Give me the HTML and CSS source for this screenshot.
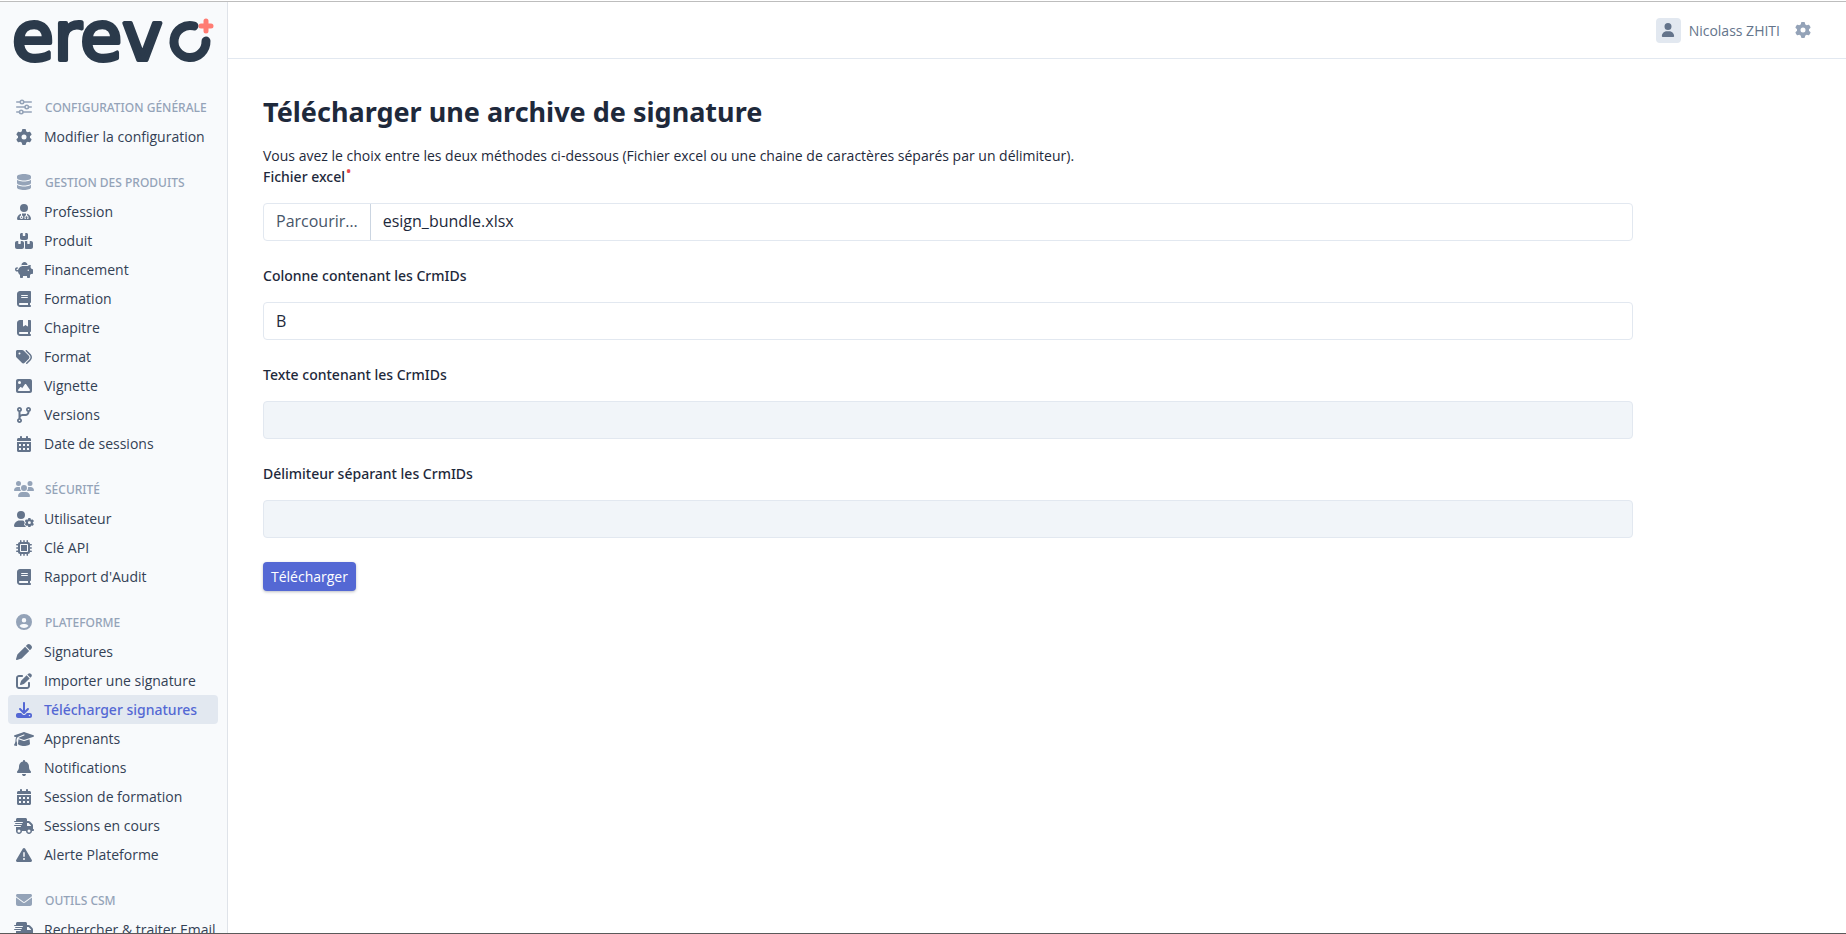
FILE: index.html
```html
<!DOCTYPE html>
<html lang="fr">
<head>
    <meta charset="UTF-8" />
    <meta name="viewport" content="width=device-width, initial-scale=1.0" />
    <title>Télécharger une archive de signature</title>
    <link rel="stylesheet" href="styles.css">
</head>
<body>

<!-- Icônes -->
<svg class="sprite" aria-hidden="true">
    <symbol id="i-sliders" viewBox="0 0 512 512"><g fill="none" stroke="currentColor" stroke-width="50" stroke-linecap="round"><path d="M24 96h100M260 96h228M24 256h252M412 256h76M24 416h76M236 416h252"/><circle cx="192" cy="96" r="56"/><circle cx="344" cy="256" r="56"/><circle cx="168" cy="416" r="56"/></g></symbol>
    <symbol id="i-gear" viewBox="0 0 512 512"><path d="M495.9 166.6c3.2 8.7 .5 18.4-6.4 24.6l-43.3 39.4c1.1 8.3 1.7 16.8 1.7 25.4s-.6 17.1-1.7 25.4l43.3 39.4c6.9 6.2 9.6 15.9 6.4 24.6c-4.4 11.9-9.7 23.3-15.8 34.3l-4.7 8.1c-6.6 11-14 21.4-22.1 31.2c-5.9 7.2-15.7 9.6-24.5 6.8l-55.7-17.7c-13.4 10.3-28.2 18.9-44 25.4l-12.5 57.1c-2 9.1-9 16.3-18.2 17.8c-13.8 2.3-28 3.5-42.5 3.5s-28.7-1.2-42.5-3.5c-9.2-1.5-16.2-8.7-18.2-17.8l-12.5-57.1c-15.8-6.5-30.6-15.1-44-25.4L83.1 425.9c-8.8 2.8-18.6 .3-24.5-6.8c-8.1-9.8-15.5-20.2-22.1-31.2l-4.7-8.1c-6.1-11-11.4-22.4-15.8-34.3c-3.2-8.7-.5-18.4 6.4-24.6l43.3-39.4C64.6 273.1 64 264.6 64 256s.6-17.1 1.7-25.4L22.4 191.2c-6.9-6.2-9.6-15.9-6.4-24.6c4.4-11.9 9.7-23.3 15.8-34.3l4.7-8.1c6.6-11 14-21.4 22.1-31.2c5.9-7.2 15.7-9.6 24.5-6.8l55.7 17.7c13.4-10.3 28.2-18.9 44-25.4l12.5-57.1c2-9.1 9-16.3 18.2-17.8C227.3 1.2 241.5 0 256 0s28.7 1.2 42.5 3.5c9.2 1.5 16.2 8.7 18.2 17.8l12.5 57.1c15.8 6.5 30.6 15.1 44 25.4l55.7-17.7c8.8-2.8 18.6-.3 24.5 6.8c8.1 9.8 15.5 20.2 22.1 31.2l4.7 8.1c6.1 11 11.4 22.4 15.8 34.3zM256 336a80 80 0 1 0 0-160 80 80 0 1 0 0 160z"/></symbol>
    <symbol id="i-database" viewBox="0 0 448 512"><path d="M448 80v48c0 44.2-100.3 80-224 80S0 172.2 0 128V80C0 35.8 100.3 0 224 0S448 35.8 448 80zM393.2 214.7c20.8-7.4 39.9-16.9 54.8-28.6V288c0 44.2-100.3 80-224 80S0 332.2 0 288V186.1c14.9 11.8 34 21.2 54.8 28.6C99.7 230.7 159.5 240 224 240s124.3-9.3 169.2-25.3zM0 346.1c14.9 11.8 34 21.2 54.8 28.6C99.7 390.7 159.5 400 224 400s124.3-9.3 169.2-25.3c20.8-7.4 39.9-16.9 54.8-28.6V432c0 44.2-100.3 80-224 80S0 476.2 0 432V346.1z"/></symbol>
    <symbol id="i-doctor" viewBox="0 0 448 512"><path d="M224 256A128 128 0 1 0 224 0a128 128 0 1 0 0 256zm-96 55.2C54 332.9 0 401.3 0 482.3C0 498.7 13.3 512 29.7 512H418.3c16.4 0 29.7-13.3 29.7-29.7c0-81-54-149.4-128-171.1V362c27.6 7.1 48 32.2 48 62v40c0 8.8-7.2 16-16 16H336c-8.8 0-16-7.2-16-16s7.2-16 16-16V424c0-17.7-14.3-32-32-32s-32 14.3-32 32v24c8.8 0 16 7.2 16 16s-7.2 16-16 16H256c-8.8 0-16-7.2-16-16V424c0-29.8 20.4-54.9 48-62V304.9c-6-.6-12.1-.9-18.3-.9H178.3c-6.2 0-12.3 .3-18.3 .9v65.4c23.1 6.9 40 28.3 40 53.7c0 30.9-25.1 56-56 56s-56-25.1-56-56c0-25.4 16.9-46.8 40-53.7V311.2zM144 448a24 24 0 1 0 0-48 24 24 0 1 0 0 48z"/></symbol>
    <symbol id="i-boxes" viewBox="0 0 576 512"><path d="M248 0H208c-26.5 0-48 21.5-48 48V160c0 35.3 28.7 64 64 64H352c35.3 0 64-28.7 64-64V48c0-26.5-21.5-48-48-48H328V80c0 8.8-7.2 16-16 16H264c-8.8 0-16-7.2-16-16V0zM64 256c-35.3 0-64 28.7-64 64V448c0 35.3 28.7 64 64 64H224c35.3 0 64-28.7 64-64V320c0-35.3-28.7-64-64-64H184v80c0 8.8-7.2 16-16 16H120c-8.8 0-16-7.2-16-16V256H64zM352 512H512c35.3 0 64-28.7 64-64V320c0-35.3-28.7-64-64-64H472v80c0 8.8-7.2 16-16 16H408c-8.8 0-16-7.2-16-16V256H352c-15 0-28.8 5.1-39.7 13.8c4.9 10.4 7.7 22 7.7 34.2V464c0 12.2-2.8 23.8-7.7 34.2C323.2 506.9 337 512 352 512z"/></symbol>
    <symbol id="i-piggy" viewBox="0 0 576 512"><path d="M400 96l0 .7c-5.3-.4-10.6-.7-16-.7H256c-16.5 0-32.5 2.1-47.8 6c-.1-2-.2-4-.2-6c0-53 43-96 96-96s96 43 96 96zm-16 32c3.5 0 7 .1 10.4 .3c4.2 .3 8.4 .7 12.6 1.3C424.6 109.1 450.8 96 480 96h11.5c10.4 0 18 9.8 15.5 19.9l-13.8 55.2c15.8 14.8 28.7 32.8 37.5 52.9H544c17.7 0 32 14.3 32 32v96c0 17.7-14.3 32-32 32H512c-9.1 12.1-19.9 22.9-32 32v64c0 17.7-14.3 32-32 32H416c-17.7 0-32-14.3-32-32V448H256v32c0 17.7-14.3 32-32 32H192c-17.7 0-32-14.3-32-32V416c-34.9-26.2-58.7-66.3-63.2-112H68c-37.6 0-68-30.4-68-68s30.4-68 68-68h4c13.3 0 24 10.7 24 24s-10.7 24-24 24H68c-11 0-20 9-20 20s9 20 20 20H99.2c12.1-59.8 57.7-107.5 116.3-122.8c12.9-3.4 26.5-5.2 40.5-5.2H384zm64 136a24 24 0 1 0 -48 0 24 24 0 1 0 48 0z"/></symbol>
    <symbol id="i-book" viewBox="0 0 448 512"><path d="M96 0C43 0 0 43 0 96V416c0 53 43 96 96 96H384h32c17.7 0 32-14.3 32-32s-14.3-32-32-32V384c17.7 0 32-14.3 32-32V32c0-17.7-14.3-32-32-32H384 96zm0 384H352v64H96c-17.7 0-32-14.3-32-32s14.3-32 32-32zm32-240c0-8.8 7.2-16 16-16H336c8.8 0 16 7.2 16 16s-7.2 16-16 16H144c-8.8 0-16-7.2-16-16zm16 48H336c8.8 0 16 7.2 16 16s-7.2 16-16 16H144c-8.8 0-16-7.2-16-16s7.2-16 16-16z"/></symbol>
    <symbol id="i-bookmark" viewBox="0 0 448 512"><path d="M0 96C0 43 43 0 96 0h96V190.7c0 13.4 15.5 20.9 26 12.5L272 160l54 43.2c10.5 8.4 26 .9 26-12.5V0h32 32c17.7 0 32 14.3 32 32V352c0 17.7-14.3 32-32 32v64c17.7 0 32 14.3 32 32s-14.3 32-32 32H384 96c-53 0-96-43-96-96V96zM64 416c0 17.7 14.3 32 32 32H352V384H96c-17.7 0-32 14.3-32 32z"/></symbol>
    <symbol id="i-tags" viewBox="0 0 512 512"><path d="M345 39.1L472.8 168.4c52.4 53 52.4 138.2 0 191.2L360.8 472.9c-9.3 9.4-24.5 9.5-33.9 .2s-9.5-24.5-.2-33.9L438.6 325.9c33.9-34.3 33.9-89.4 0-123.7L310.9 72.9c-9.3-9.4-9.2-24.6 .2-33.9s24.6-9.2 33.9 .2zM0 229.5V80C0 53.5 21.5 32 48 32H197.5c17 0 33.3 6.7 45.3 18.7l168 168c25 25 25 65.5 0 90.5L277.3 442.7c-25 25-65.5 25-90.5 0l-168-168C6.7 262.7 0 246.5 0 229.5zM144 144a32 32 0 1 0 -64 0 32 32 0 1 0 64 0z"/></symbol>
    <symbol id="i-image" viewBox="0 0 512 512"><path d="M0 96C0 60.7 28.7 32 64 32H448c35.3 0 64 28.7 64 64V416c0 35.3-28.7 64-64 64H64c-35.3 0-64-28.7-64-64V96zM323.8 202.5c-4.5-6.6-11.9-10.5-19.8-10.5s-15.4 3.9-19.8 10.5l-87 127.6L170.7 297c-4.6-5.7-11.5-9-18.7-9s-14.2 3.3-18.7 9l-64 80c-5.8 7.2-6.9 17.1-2.9 25.4s12.4 13.6 21.6 13.6h96 32H424c8.9 0 17.1-4.9 21.2-12.8s3.6-17.4-1.4-24.7l-120-176zM112 192a48 48 0 1 0 0-96 48 48 0 1 0 0 96z"/></symbol>
    <symbol id="i-branch" viewBox="0 0 448 512"><path fill-rule="evenodd" d="M160 80c0 32.8-19.7 61-48 73.3v87.8c18.8-10.9 40.7-17.1 64-17.1h96c35.3 0 64-28.7 64-64v-6.7C307.7 141 288 112.8 288 80c0-44.2 35.8-80 80-80s80 35.8 80 80c0 32.8-19.7 61-48 73.3V160c0 70.7-57.3 128-128 128H176c-35.3 0-64 28.7-64 64v6.7c28.3 12.3 48 40.5 48 73.3c0 44.2-35.8 80-80 80s-80-35.8-80-80c0-32.8 19.7-61 48-73.3V153.3C19.7 141 0 112.8 0 80C0 35.8 35.8 0 80 0s80 35.8 80 80zM80 104a24 24 0 1 0 0-48 24 24 0 1 0 0 48zM392 80a24 24 0 1 0 -48 0 24 24 0 1 0 48 0zM80 456a24 24 0 1 0 0-48 24 24 0 1 0 0 48z"/></symbol>
    <symbol id="i-calendar" viewBox="0 0 448 512"><path fill-rule="evenodd" d="M128 0c17.7 0 32 14.3 32 32V64H288V32c0-17.7 14.3-32 32-32s32 14.3 32 32V64h48c26.5 0 48 21.5 48 48v48H0V112C0 85.5 21.5 64 48 64H96V32c0-17.7 14.3-32 32-32zM0 192H448V464c0 26.5-21.5 48-48 48H48c-26.5 0-48-21.5-48-48V192zM64 256v64h64v-64zM192 256v64h64v-64zM320 256v64h64v-64zM64 384v64h64v-64zM192 384v64h64v-64zM320 384v64h64v-64z"/></symbol>
    <symbol id="i-users" viewBox="0 0 640 512"><path d="M144 0a80 80 0 1 1 0 160A80 80 0 1 1 144 0zM512 0a80 80 0 1 1 0 160A80 80 0 1 1 512 0zM0 298.7C0 239.8 47.8 192 106.7 192h42.7c15.9 0 31 3.5 44.6 9.7c-1.3 7.2-1.9 14.7-1.9 22.3c0 38.2 16.8 72.5 43.3 96c-.2 0-.4 0-.7 0H21.3C9.6 320 0 310.4 0 298.7zM405.3 320c-.2 0-.4 0-.7 0c26.6-23.5 43.3-57.8 43.3-96c0-7.6-.7-15-1.9-22.3c13.6-6.3 28.7-9.7 44.6-9.7h42.7C592.2 192 640 239.8 640 298.7c0 11.8-9.6 21.3-21.3 21.3H405.3zM224 224a96 96 0 1 1 192 0 96 96 0 1 1 -192 0zM128 485.3C128 411.7 187.7 352 261.3 352H378.7C452.3 352 512 411.7 512 485.3c0 14.7-11.9 26.7-26.7 26.7H154.7c-14.7 0-26.7-11.9-26.7-26.7z"/></symbol>
    <symbol id="i-user-gear" viewBox="0 0 640 512"><path d="M224 256A128 128 0 1 0 224 0a128 128 0 1 0 0 256zm-45.7 48C79.8 304 0 383.8 0 482.3C0 498.7 13.3 512 29.7 512H392c-30-18-50-40-66-72c-8-18-4-32 10-44l18-16-18-16c-14-12-18-28-10-46c-18-8-36-14-56-14z"/><use href="#i-gear" x="342" y="222" width="300" height="300"/></symbol>
    <symbol id="i-chip" viewBox="0 0 512 512"><path fill-rule="evenodd" d="M176 24c0-13.3-10.7-24-24-24s-24 10.7-24 24V64c-35.3 0-64 28.7-64 64H24c-13.3 0-24 10.7-24 24s10.7 24 24 24H64v56H24c-13.3 0-24 10.7-24 24s10.7 24 24 24H64v56H24c-13.3 0-24 10.7-24 24s10.7 24 24 24H64c0 35.3 28.7 64 64 64v40c0 13.3 10.7 24 24 24s24-10.7 24-24V448h56v40c0 13.3 10.7 24 24 24s24-10.7 24-24V448h56v40c0 13.3 10.7 24 24 24s24-10.7 24-24V448c35.3 0 64-28.7 64-64h40c13.3 0 24-10.7 24-24s-10.7-24-24-24H448V280h40c13.3 0 24-10.7 24-24s-10.7-24-24-24H448V176h40c13.3 0 24-10.7 24-24s-10.7-24-24-24H448c0-35.3-28.7-64-64-64V24c0-13.3-10.7-24-24-24s-24 10.7-24 24V64H280V24c0-13.3-10.7-24-24-24s-24 10.7-24 24V64H176V24zM160 128H352c17.7 0 32 14.3 32 32V352c0 17.7-14.3 32-32 32H160c-17.7 0-32-14.3-32-32V160c0-17.7 14.3-32 32-32zm192 32H160V352H352V160z"/></symbol>
    <symbol id="i-circle-user" viewBox="0 0 512 512"><path fill-rule="evenodd" d="M399 384.2C376.9 345.8 335.4 320 288 320H224c-47.4 0-88.9 25.8-111 64.2c35.2 39.2 86.2 63.8 143 63.8s107.8-24.7 143-63.8zM0 256a256 256 0 1 1 512 0A256 256 0 1 1 0 256zm256 16a72 72 0 1 0 0-144 72 72 0 1 0 0 144z"/></symbol>
    <symbol id="i-pen" viewBox="0 0 512 512"><path d="M362.7 19.3L314.3 67.7 444.3 197.7l48.4-48.4c25-25 25-65.5 0-90.5L453.3 19.3c-25-25-65.5-25-90.5 0zm-71 71L58.6 323.5c-10.4 10.4-18 23.3-22.2 37.4L1 481.2C-1.5 489.7 .8 498.8 7 505s15.3 8.5 23.7 6.1l120.3-35.4c14.1-4.2 27-11.8 37.4-22.2L421.7 220.3 291.7 90.3z"/></symbol>
    <symbol id="i-edit" viewBox="0 0 512 512"><path d="M471.6 21.7c-21.9-21.9-57.3-21.9-79.2 0L362.3 51.7l97.9 97.9 30.1-30.1c21.9-21.9 21.9-57.3 0-79.2L471.6 21.7zm-299.2 220c-6.1 6.1-10.8 13.6-13.5 21.9l-29.6 88.8c-2.9 8.6-.6 18.1 5.8 24.6s15.9 8.7 24.6 5.8l88.8-29.6c8.2-2.7 15.7-7.4 21.9-13.5L437.7 172.3 339.7 74.3 172.4 241.7zM96 64C43 64 0 107 0 160V416c0 53 43 96 96 96H352c53 0 96-43 96-96V320c0-17.7-14.3-32-32-32s-32 14.3-32 32v96c0 17.7-14.3 32-32 32H96c-17.7 0-32-14.3-32-32V160c0-17.7 14.3-32 32-32h96c17.7 0 32-14.3 32-32s-14.3-32-32-32H96z"/></symbol>
    <symbol id="i-download" viewBox="0 0 512 512"><path fill-rule="evenodd" d="M288 32c0-17.7-14.3-32-32-32s-32 14.3-32 32V274.7l-73.4-73.4c-12.5-12.5-32.8-12.5-45.3 0s-12.5 32.8 0 45.3l128 128c12.5 12.5 32.8 12.5 45.3 0l128-128c12.5-12.5 12.5-32.8 0-45.3s-32.8-12.5-45.3 0L288 274.7V32zM64 352c-35.3 0-64 28.7-64 64v32c0 35.3 28.7 64 64 64H448c35.3 0 64-28.7 64-64V416c0-35.3-28.7-64-64-64H346.5l-45.3 45.3c-25 25-65.5 25-90.5 0L165.5 352H64zm368 56a24 24 0 1 1 0 48 24 24 0 1 1 0-48z"/></symbol>
    <symbol id="i-cap" viewBox="0 0 640 512"><path d="M320 32c-8.1 0-16.1 1.4-23.7 4.1L15.8 137.4C6.3 140.9 0 149.9 0 160s6.3 19.1 15.8 22.6l57.9 20.9C57.3 229.3 48 259.8 48 291.9v28.1c0 28.4-10.8 57.7-22.3 80.8c-6.5 13-13.9 25.8-22.5 37.6C0 442.7-.9 448.3 .9 453.4s6 8.9 11.2 10.2l64 16c4.2 1.1 8.7 .3 12.4-2s6.3-6.1 7.1-10.4c8.6-42.8 4.3-81.2-2.1-108.7C90.3 344.3 86 329.8 80 316.5V291.9c0-30.2 10.2-58.7 27.9-81.5c12.9-15.5 29.6-28 49.2-35.7l157-61.7c8.2-3.2 17.5 .8 20.7 9s-.8 17.5-9 20.7l-157 61.7c-12.4 4.9-23.3 12.4-32.2 21.6l159.6 57.6c7.6 2.7 15.6 4.1 23.7 4.1s16.1-1.4 23.7-4.1L624.2 182.6c9.5-3.4 15.8-12.5 15.8-22.6s-6.3-19.1-15.8-22.6L343.7 36.1C336.1 33.4 328.1 32 320 32zM128 408c0 35.3 86 72 192 72s192-36.7 192-72L496.7 262.6 354.5 314c-11.1 4-22.8 6-34.5 6s-23.5-2-34.5-6L143.3 262.6 128 408z"/></symbol>
    <symbol id="i-bell" viewBox="0 0 448 512"><path d="M224 0c-17.7 0-32 14.3-32 32V51.2C119 66 64 130.6 64 208v18.8c0 47-17.3 92.4-48.5 127.6l-7.4 8.3c-8.4 9.4-10.4 22.9-5.3 34.4S19.4 416 32 416H416c12.6 0 24-7.4 29.2-18.9s3.1-25-5.3-34.4l-7.4-8.3C401.3 319.2 384 273.9 384 226.8V208c0-77.4-55-142-128-156.8V32c0-17.7-14.3-32-32-32zm45.3 493.3c12-12 18.7-28.3 18.7-45.3H224 160c0 17 6.7 33.3 18.7 45.3s28.3 18.7 45.3 18.7s33.3-6.7 45.3-18.7z"/></symbol>
    <symbol id="i-truck" viewBox="0 0 640 512"><path d="M112 0C85.5 0 64 21.5 64 48V96H16c-8.8 0-16 7.2-16 16s7.2 16 16 16H64 272c8.8 0 16 7.2 16 16s-7.2 16-16 16H64 48c-8.8 0-16 7.2-16 16s7.2 16 16 16H64 240c8.8 0 16 7.2 16 16s-7.2 16-16 16H64 16c-8.8 0-16 7.2-16 16s7.2 16 16 16H64 208c8.8 0 16 7.2 16 16s-7.2 16-16 16H64V416c0 53 43 96 96 96s96-43 96-96H384c0 53 43 96 96 96s96-43 96-96h32c17.7 0 32-14.3 32-32s-14.3-32-32-32V288 256 237.3c0-17-6.7-33.3-18.7-45.3L512 114.7c-12-12-28.3-18.7-45.3-18.7H416V48c0-26.5-21.5-48-48-48H112zM544 237.3V256H416V160h50.7L544 237.3zM160 368a48 48 0 1 1 0 96 48 48 0 1 1 0-96zm272 48a48 48 0 1 1 96 0 48 48 0 1 1 -96 0z"/></symbol>
    <symbol id="i-warning" viewBox="0 0 512 512"><path fill-rule="evenodd" d="M256 32c14.2 0 27.3 7.5 34.5 19.8l216 368c7.3 12.4 7.3 27.7 .2 40.1S486.3 480 472 480H40c-14.3 0-27.6-7.7-34.7-20.1s-7-27.8 .2-40.1l216-368C228.7 39.5 241.8 32 256 32zm0 128c-13.3 0-24 10.7-24 24V296c0 13.3 10.7 24 24 24s24-10.7 24-24V184c0-13.3-10.7-24-24-24zm32 224a32 32 0 1 0 -64 0 32 32 0 1 0 64 0z"/></symbol>
    <symbol id="i-envelope" viewBox="0 0 512 512"><path d="M48 64C21.5 64 0 85.5 0 112c0 15.1 7.1 29.3 19.2 38.4L236.8 313.6c11.4 8.5 27 8.5 38.4 0L492.8 150.4c12.1-9.1 19.2-23.3 19.2-38.4c0-26.5-21.5-48-48-48H48zM0 176V384c0 35.3 28.7 64 64 64H448c35.3 0 64-28.7 64-64V176L294.4 339.2c-22.8 17.1-54 17.1-76.8 0L0 176z"/></symbol>
    <symbol id="i-user" viewBox="0 0 448 512"><path d="M224 256A128 128 0 1 0 224 0a128 128 0 1 0 0 256zm-45.7 48C79.8 304 0 383.8 0 482.3C0 498.7 13.3 512 29.7 512H418.3c16.4 0 29.7-13.3 29.7-29.7C448 383.8 368.2 304 269.7 304H178.3z"/></symbol>
</svg>

<div class="wrapper">
    <!-- Menu latéral -->
    <aside class="sidebar">
        <a class="logo" href="#" aria-label="erevo">
            <svg viewBox="0 0 210 56" width="210" height="56">
                <text class="logo-text" x="4" y="46">erev</text>
                <path class="logo-ring" d="M186 12A16 16 0 1 0 198 27"/>
                <path class="logo-plus" d="M198 7v10M193 12h10"/>
            </svg>
        </a>
        <nav>
            <h2 class="menu-header"><svg class="icon"><use href="#i-sliders"/></svg>Configuration générale</h2>
            <ul class="menu">
                <li><a href="#"><svg class="icon"><use href="#i-gear"/></svg>Modifier la configuration</a></li>
            </ul>
            <h2 class="menu-header"><svg class="icon"><use href="#i-database"/></svg>Gestion des produits</h2>
            <ul class="menu">
                <li><a href="#"><svg class="icon"><use href="#i-doctor"/></svg>Profession</a></li>
                <li><a href="#"><svg class="icon"><use href="#i-boxes"/></svg>Produit</a></li>
                <li><a href="#"><svg class="icon"><use href="#i-piggy"/></svg>Financement</a></li>
                <li><a href="#"><svg class="icon"><use href="#i-book"/></svg>Formation</a></li>
                <li><a href="#"><svg class="icon"><use href="#i-bookmark"/></svg>Chapitre</a></li>
                <li><a href="#"><svg class="icon"><use href="#i-tags"/></svg>Format</a></li>
                <li><a href="#"><svg class="icon"><use href="#i-image"/></svg>Vignette</a></li>
                <li><a href="#"><svg class="icon"><use href="#i-branch"/></svg>Versions</a></li>
                <li><a href="#"><svg class="icon"><use href="#i-calendar"/></svg>Date de sessions</a></li>
            </ul>
            <h2 class="menu-header"><svg class="icon"><use href="#i-users"/></svg>Sécurité</h2>
            <ul class="menu">
                <li><a href="#"><svg class="icon"><use href="#i-user-gear"/></svg>Utilisateur</a></li>
                <li><a href="#"><svg class="icon"><use href="#i-chip"/></svg>Clé API</a></li>
                <li><a href="#"><svg class="icon"><use href="#i-book"/></svg>Rapport d'Audit</a></li>
            </ul>
            <h2 class="menu-header"><svg class="icon"><use href="#i-circle-user"/></svg>Plateforme</h2>
            <ul class="menu">
                <li><a href="#"><svg class="icon"><use href="#i-pen"/></svg>Signatures</a></li>
                <li><a href="#"><svg class="icon"><use href="#i-edit"/></svg>Importer une signature</a></li>
                <li><a href="#" class="active"><svg class="icon"><use href="#i-download"/></svg>Télécharger signatures</a></li>
                <li><a href="#"><svg class="icon"><use href="#i-cap"/></svg>Apprenants</a></li>
                <li><a href="#"><svg class="icon"><use href="#i-bell"/></svg>Notifications</a></li>
                <li><a href="#"><svg class="icon"><use href="#i-calendar"/></svg>Session de formation</a></li>
                <li><a href="#"><svg class="icon"><use href="#i-truck"/></svg>Sessions en cours</a></li>
                <li><a href="#"><svg class="icon"><use href="#i-warning"/></svg>Alerte Plateforme</a></li>
            </ul>
            <h2 class="menu-header"><svg class="icon"><use href="#i-envelope"/></svg>Outils CSM</h2>
            <ul class="menu">
                <li><a href="#"><svg class="icon"><use href="#i-truck"/></svg>Rechercher &amp; traiter Email</a></li>
            </ul>
        </nav>
    </aside>

    <div class="page">
        <header class="topbar">
            <a class="user" href="#">
                <span class="avatar"><svg class="icon"><use href="#i-user"/></svg></span>
                Nicolass ZHITI
            </a>
            <button class="settings" type="button" aria-label="Paramètres"><svg class="icon"><use href="#i-gear"/></svg></button>
        </header>

        <main class="content">
            <h1>Télécharger une archive de signature</h1>
            <p class="help">Vous avez le choix entre les deux méthodes ci-dessous (Fichier excel ou une chaine de caractères séparés par un délimiteur).</p>

            <form id="formSignature">
                <div class="form-group">
                    <label class="required" for="fichier">Fichier excel</label>
                    <label class="form-control file" for="fichier">
                        <input type="file" id="fichier" accept=".xlsx" />
                        <span class="file-button">Parcourir…</span>
                        <span class="file-name">esign_bundle.xlsx</span>
                    </label>
                </div>
                <div class="form-group">
                    <label for="colonne">Colonne contenant les CrmIDs</label>
                    <input class="form-control" type="text" id="colonne" value="B" />
                </div>
                <div class="form-group">
                    <label for="texte">Texte contenant les CrmIDs</label>
                    <input class="form-control" type="text" id="texte" disabled />
                </div>
                <div class="form-group">
                    <label for="delimiteur">Délimiteur séparant les CrmIDs</label>
                    <input class="form-control" type="text" id="delimiteur" disabled />
                </div>
                <button class="btn" type="submit">Télécharger</button>
            </form>
        </main>
    </div>
</div>

</body>
</html>
```
FILE: styles.css
```css
* {
    box-sizing: border-box;
}

body {
    height: 100vh;
    margin: 0;
    padding-top: 1px;
    overflow: hidden;
    font-family: "Open Sans", "Noto Sans", sans-serif;
    font-size: 14px;
    line-height: 21px;
    color: #1e293b;
    background-color: #fff;
}

a {
    color: inherit;
    text-decoration: none;
}

.sprite {
    display: none;
}

.icon {
    width: 20px;
    height: 16px;
    fill: currentColor;
    flex-shrink: 0;
}

.wrapper {
    display: flex;
    height: 100%;
    border-top: 1px solid #bdbdbd;
    border-bottom: 1px solid #5a5a5a;
    overflow: hidden;
}

/* Barre latérale */
.sidebar {
    width: 228px;
    flex-shrink: 0;
    padding: 12px 9px 0 8px;
    overflow: hidden;
    background-color: #f8fafc;
    border-right: 1px solid #dfe3e9;
}

.logo {
    display: block;
    height: 78px;
}

.logo svg {
    display: block;
    overflow: visible;
}

.logo-text {
    font-family: "DejaVu Sans", sans-serif;
    font-size: 68px;
    fill: #2b3a4b;
    stroke: #2b3a4b;
    stroke-width: 4px;
    stroke-linejoin: round;
}

.logo-ring {
    fill: none;
    stroke: #2b3a4b;
    stroke-width: 9px;
    stroke-linecap: round;
}

.logo-plus {
    fill: none;
    stroke: #ff7c73;
    stroke-width: 5px;
    stroke-linecap: round;
}

.menu-header {
    display: flex;
    align-items: center;
    gap: 11px;
    height: 30px;
    margin: 16px 0 0;
    padding-left: 6px;
    font-family: "Noto Sans", sans-serif;
    font-size: 12px;
    font-weight: 500;
    text-transform: uppercase;
    white-space: nowrap;
    color: #94a3b8;
}

.menu-header:first-child {
    margin-top: 0;
}

.menu {
    list-style: none;
    margin: 0;
    padding: 0;
}

.menu a {
    display: flex;
    align-items: center;
    gap: 10px;
    height: 29px;
    padding-left: 6px;
    border-radius: 4px;
    white-space: nowrap;
    color: #334155;
}

.menu .icon {
    color: #64748b;
}

.menu a.active {
    background-color: #e2e8f0;
    color: #5468d4;
    font-family: "Noto Sans", sans-serif;
    font-weight: 500;
}

.menu a.active .icon {
    color: #5468d4;
}

/* Contenu */
.page {
    flex: 1;
    min-width: 0;
}

.topbar {
    display: flex;
    align-items: center;
    justify-content: flex-end;
    gap: 13px;
    height: 57px;
    padding-right: 33px;
    border-bottom: 1px solid #e2e8f0;
}

.user {
    display: flex;
    align-items: center;
    gap: 8px;
    color: #64748b;
}

.avatar {
    display: flex;
    align-items: center;
    justify-content: center;
    width: 25px;
    height: 25px;
    border-radius: 4px;
    background-color: #e2e8f0;
}

.avatar .icon {
    height: 14px;
}

.settings {
    display: flex;
    padding: 0;
    border: none;
    background: none;
    color: #94a3b8;
    cursor: pointer;
}

.content {
    padding: 35px;
}

h1 {
    margin: 0 0 15px;
    font-family: "Noto Sans", sans-serif;
    font-size: 27px;
    font-weight: 700;
    line-height: 36px;
}

.help {
    margin: 0;
}

form {
    width: 88.5%;
}

.form-group {
    margin-bottom: 24px;
}

.form-group > label:first-child {
    display: block;
    margin-bottom: 16px;
    font-family: "Noto Sans", sans-serif;
    font-weight: 500;
}

.required::after {
    content: "•";
    margin-left: 1px;
    color: #e5484d;
    vertical-align: super;
    font-size: 14px;
    line-height: 0;
}

.form-control {
    display: block;
    width: 100%;
    height: 38px;
    padding: 0 12px;
    border: 1px solid #e2e8f0;
    border-radius: 4px;
    background-color: #fff;
    font-family: inherit;
    font-size: 16px;
    color: #1e293b;
}

.form-control:disabled {
    background-color: #f1f5f9;
}

.file {
    display: flex;
    align-items: stretch;
    position: relative;
    line-height: 35px;
    cursor: pointer;
}

.file input {
    position: absolute;
    inset: 0;
    opacity: 0;
}

.file-button {
    padding-right: 12px;
    border-right: 1px solid #cbd5e1;
    color: #475569;
}

.file-name {
    padding-left: 12px;
}

.btn {
    height: 29px;
    padding: 0 8px;
    border: none;
    border-radius: 4px;
    background-color: #5468d4;
    box-shadow: 0 1px 3px rgba(30, 41, 59, 0.3);
    color: #fff;
    font-family: inherit;
    font-size: 14px;
    cursor: pointer;
}
```
